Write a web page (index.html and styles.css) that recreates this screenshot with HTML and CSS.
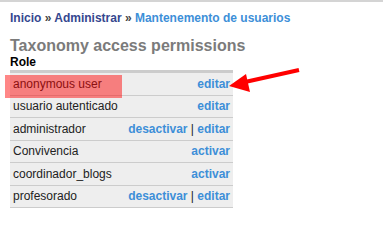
FILE: index.html
```html
<!DOCTYPE html>
<html>
<head>
<meta charset="utf-8">
<link rel="stylesheet" href="styles.css">
</head>
<body>
<div class="page">
  <div class="breadcrumb"><a class="dark" href="#">Inicio</a> » <a class="dark" href="#">Administrar</a> » <a class="light" href="#">Mantenemento de usuarios</a></div>
  <h1 class="title">Taxonomy access permissions</h1>
  <div class="role-head">Role</div>
  <table class="roles">
    <tr><td class="name">anonymous user</td><td class="ops"><a href="#">editar</a></td></tr>
    <tr><td class="name">usuario autenticado</td><td class="ops"><a href="#">editar</a></td></tr>
    <tr><td class="name">administrador</td><td class="ops"><a href="#">desactivar</a> | <a href="#">editar</a></td></tr>
    <tr><td class="name">Convivencia</td><td class="ops"><a href="#">activar</a></td></tr>
    <tr><td class="name">coordinador_blogs</td><td class="ops"><a href="#">activar</a></td></tr>
    <tr><td class="name">profesorado</td><td class="ops"><a href="#">desactivar</a> | <a href="#">editar</a></td></tr>
  </table>
  <div class="highlight"></div>
  <svg class="arrow" width="72" height="28" viewBox="0 0 72 28">
    <line x1="70" y1="3" x2="16" y2="15" stroke="#ff0000" stroke-width="4"/>
    <polygon points="0,19 17,7 21,25" fill="#ff0000"/>
  </svg>
</div>
</body>
</html>
```
FILE: styles.css
```css
html, body {
  margin: 0;
  padding: 0;
  background: #fff;
}
body {
  font-family: "Liberation Sans", Arial, sans-serif;
  font-size: 12px;
  color: #222;
}
.page {
  position: relative;
  border-top: 2px solid #d4d4d4;
  padding: 9px 10px 0 10px;
  height: 239px;
}
.breadcrumb {
  font-weight: bold;
  font-size: 12px;
  line-height: 14px;
  color: #444;
}
.breadcrumb a {
  text-decoration: none;
}
.breadcrumb .dark {
  color: #35478f;
}
.breadcrumb .light {
  color: #3d8fd8;
}
.title {
  margin: 12px 0 0 0;
  font-size: 16px;
  line-height: 18px;
  font-weight: bold;
  color: #7b7b7b;
}
.role-head {
  font-weight: bold;
  font-size: 12px;
  color: #000;
  line-height: 14px;
}
.roles {
  border-collapse: collapse;
  width: 223px;
  margin-top: 1px;
  border-top: 3px solid #cccccc;
}
.roles td {
  background: #eeeeee;
  border-bottom: 1px solid #cccccc;
  height: 21.5px;
  padding: 0 3px;
  color: #222;
  white-space: nowrap;
}
.roles td.ops {
  text-align: right;
}
.roles td.ops a {
  color: #3d8fd8;
  font-weight: bold;
  text-decoration: none;
}
.highlight {
  position: absolute;
  left: 5px;
  top: 73px;
  width: 117px;
  height: 23px;
  background: rgba(255, 0, 0, 0.47);
}
.arrow {
  position: absolute;
  left: 229px;
  top: 65px;
}
```
